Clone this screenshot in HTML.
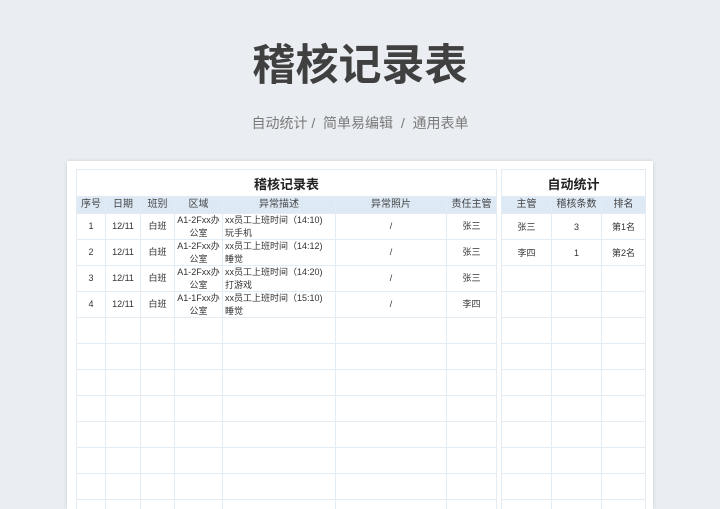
<!DOCTYPE html>
<html style="overflow:hidden;height:509px"><head><meta charset="utf-8"><style>
body{margin:0;width:720px;height:509px;overflow:hidden;background:#eaeef2;font-family:"Liberation Sans","Noto Sans CJK SC",sans-serif;position:relative}
.t{position:absolute;left:0;width:720px;text-align:center}
.sheet{position:absolute;left:67px;top:161px;width:586px;height:348px;background:#fff;box-shadow:0 0 4px rgba(0,0,0,.12)}
.wrap{position:absolute;top:0;left:0;width:720px;height:509px;overflow:hidden}
table{position:absolute;border-collapse:collapse;table-layout:fixed;font-size:9px;color:#333}
td{border:1px solid #e3ebf3;text-align:center;padding:0;height:25px;overflow:hidden}
td div{height:25px;overflow:hidden;line-height:13px}
td div.c{line-height:25px}
tr.h td{background:#dde9f5;height:16px;font-size:10px;color:#444;line-height:16px}
tr.tt td{height:26px;font-size:13px;font-weight:bold;color:#222}
td.l{text-align:left;padding-left:2px}
</style></head><body><div class="wrap">
<div class="t" style="top:38px;font-size:43px;font-weight:bold;color:#404040;line-height:56px">稽核记录表</div>
<div class="t" style="top:113px;font-size:14px;color:#7a7a7a;line-height:20px">自动统计 /&nbsp; 简单易编辑&nbsp; / &nbsp;通用表单</div>
<div class="sheet"></div>
<table style="left:76px;top:169px;width:420px">
<colgroup><col style="width:29px"><col style="width:35px"><col style="width:34px"><col style="width:48px"><col style="width:113px"><col style="width:111px"><col style="width:50px"></colgroup>
<tr class="tt"><td colspan="7">稽核记录表</td></tr>
<tr class="h"><td>序号</td><td>日期</td><td>班别</td><td>区域</td><td>异常描述</td><td>异常照片</td><td>责任主管</td></tr>
<tr><td><div class="c">1</div></td><td><div class="c">12/11</div></td><td><div class="c">白班</div></td><td><div>A1-2Fxx办<br>公室</div></td><td class="l"><div>xx员工上班时间（14:10)<br>玩手机</div></td><td><div class="c">/</div></td><td><div class="c">张三</div></td></tr>
<tr><td><div class="c">2</div></td><td><div class="c">12/11</div></td><td><div class="c">白班</div></td><td><div>A1-2Fxx办<br>公室</div></td><td class="l"><div>xx员工上班时间（14:12)<br>睡觉</div></td><td><div class="c">/</div></td><td><div class="c">张三</div></td></tr>
<tr><td><div class="c">3</div></td><td><div class="c">12/11</div></td><td><div class="c">白班</div></td><td><div>A1-2Fxx办<br>公室</div></td><td class="l"><div>xx员工上班时间（14:20)<br>打游戏</div></td><td><div class="c">/</div></td><td><div class="c">张三</div></td></tr>
<tr><td><div class="c">4</div></td><td><div class="c">12/11</div></td><td><div class="c">白班</div></td><td><div>A1-1Fxx办<br>公室</div></td><td class="l"><div>xx员工上班时间（15:10)<br>睡觉</div></td><td><div class="c">/</div></td><td><div class="c">李四</div></td></tr>
<tr><td></td><td></td><td></td><td></td><td></td><td></td><td></td></tr>
<tr><td></td><td></td><td></td><td></td><td></td><td></td><td></td></tr>
<tr><td></td><td></td><td></td><td></td><td></td><td></td><td></td></tr>
<tr><td></td><td></td><td></td><td></td><td></td><td></td><td></td></tr>
<tr><td></td><td></td><td></td><td></td><td></td><td></td><td></td></tr>
<tr><td></td><td></td><td></td><td></td><td></td><td></td><td></td></tr>
<tr><td></td><td></td><td></td><td></td><td></td><td></td><td></td></tr>
<tr><td></td><td></td><td></td><td></td><td></td><td></td><td></td></tr>
</table>
<table style="left:501px;top:169px;width:144px">
<colgroup><col style="width:50px"><col style="width:50px"><col style="width:44px"></colgroup>
<tr class="tt"><td colspan="3">自动统计</td></tr>
<tr class="h"><td>主管</td><td>稽核条数</td><td>排名</td></tr>
<tr><td>张三</td><td>3</td><td>第1名</td></tr>
<tr><td>李四</td><td>1</td><td>第2名</td></tr>
<tr><td></td><td></td><td></td></tr><tr><td></td><td></td><td></td></tr><tr><td></td><td></td><td></td></tr><tr><td></td><td></td><td></td></tr><tr><td></td><td></td><td></td></tr><tr><td></td><td></td><td></td></tr><tr><td></td><td></td><td></td></tr><tr><td></td><td></td><td></td></tr><tr><td></td><td></td><td></td></tr><tr><td></td><td></td><td></td></tr>
</table>
</div></body></html>
